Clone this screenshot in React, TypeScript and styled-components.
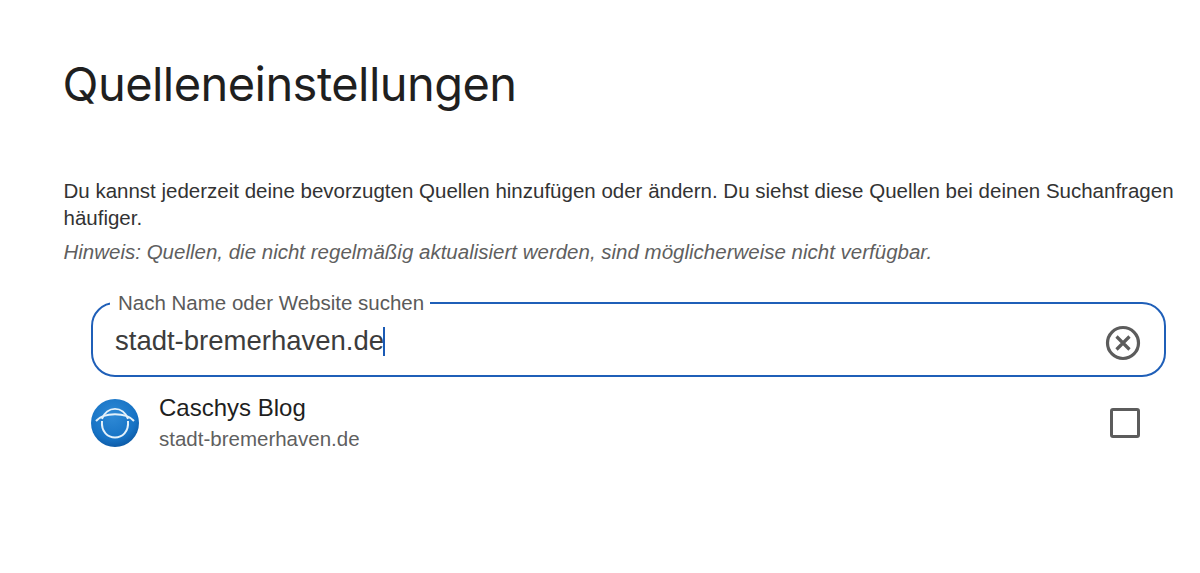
import React from 'react';
import styled, { createGlobalStyle } from 'styled-components';

const GlobalStyle = createGlobalStyle`
  html, body {
    margin: 0;
    padding: 0;
    background: #fff;
    overflow: hidden;
  }
`;

const Page = styled.main`
  box-sizing: border-box;
  width: 1200px;
  height: 573px;
  padding: 54px 24px 0 63.5px;
  font-family: 'Liberation Sans', Arial, sans-serif;
  color: #1f1f1f;
`;

const Title = styled.h1`
  margin: 0 0 0 -1px;
  font-family: Inter, 'Open Sans', sans-serif;
  font-size: 47px;
  line-height: 60px;
  font-weight: 400;
  letter-spacing: -0.55px;
  color: #1f1f1f;
`;

const Intro = styled.p`
  margin: 63px 0 0;
  font-size: 20.5px;
  line-height: 27px;
  color: #333;
`;

const Hint = styled.p`
  margin: 7px 0 0;
  font-size: 20.5px;
  line-height: 27px;
  font-style: italic;
  color: #5f5f5f;
`;

const SearchField = styled.fieldset`
  box-sizing: border-box;
  display: flex;
  align-items: center;
  justify-content: space-between;
  width: 1075px;
  height: 84px;
  margin: 28px 0 0 27.5px;
  padding: 0 23px 6px 22px;
  border: 2px solid #1f5fb8;
  border-radius: 24px;
`;

const SearchLabel = styled.legend`
  margin-left: -5px;
  padding: 0 6px 0 8px;
  font-size: 20.5px;
  line-height: 20px;
  color: #5a5a5a;
`;

const SearchValue = styled.div`
  display: flex;
  align-items: center;
  font-size: 27.5px;
  line-height: 32px;
  color: #3c3c3c;
`;

const Caret = styled.span`
  display: inline-block;
  width: 1.5px;
  height: 29px;
  margin-left: -1px;
  background: #1a5ab5;
`;

const IconButton = styled.button`
  display: flex;
  margin-top: 3px;
  padding: 0;
  border: 0;
  background: none;
`;

const ResultRow = styled.div`
  display: flex;
  align-items: center;
  margin: 15px 0 0 27.5px;
  width: 1049px;
`;

const Favicon = styled.svg`
  flex: none;
  width: 48px;
  height: 48px;
`;

const ResultText = styled.div`
  flex: 1;
  margin-left: 20px;
`;

const ResultName = styled.div`
  font-size: 24px;
  line-height: 32px;
  color: #1f1f1f;
`;

const ResultHost = styled.div`
  font-size: 20.5px;
  line-height: 30px;
  color: #5f5f5f;
`;

const Checkbox = styled.span`
  box-sizing: border-box;
  width: 30px;
  height: 30px;
  border: 3.5px solid #5c5c5c;
  border-radius: 3px;
`;

export default function App() {
  return (
    <Page>
      <GlobalStyle />
      <Title>Quelleneinstellungen</Title>
      <Intro>
        Du kannst jederzeit deine bevorzugten Quellen hinzufügen oder ändern. Du siehst diese Quellen bei deinen
        Suchanfragen häufiger.
      </Intro>
      <Hint>Hinweis: Quellen, die nicht regelmäßig aktualisiert werden, sind möglicherweise nicht verfügbar.</Hint>
      <SearchField>
        <SearchLabel>Nach Name oder Website suchen</SearchLabel>
        <SearchValue>
          stadt-bremerhaven.de
          <Caret />
        </SearchValue>
        <IconButton aria-label="Löschen">
          <svg width="36" height="36" viewBox="0 0 36 36" fill="none" stroke="#5c5c5c">
            <circle cx="18" cy="18" r="15.5" strokeWidth="3.2" />
            <path d="M11.5 11.5 24.5 24.5M24.5 11.5 11.5 24.5" strokeWidth="3.2" />
          </svg>
        </IconButton>
      </SearchField>
      <ResultRow>
        <Favicon viewBox="0 0 48 48">
          <defs>
            <radialGradient id="globe" cx="0.45" cy="0.35" r="0.7">
              <stop offset="0" stopColor="#2f8ad6" />
              <stop offset="0.7" stopColor="#1672c4" />
              <stop offset="1" stopColor="#0b55a0" />
            </radialGradient>
          </defs>
          <circle cx="24" cy="24" r="24" fill="url(#globe)" />
          <g fill="none" stroke="#e4f1fa">
            <path d="M11 20C15 6.5 33 6.5 37 20" strokeWidth="1.8" />
            <path d="M5 22C13 13 35 13 43 22" strokeWidth="2" />
            <path d="M11 22C9 44 39 44 37 22" strokeWidth="2" />
          </g>
        </Favicon>
        <ResultText>
          <ResultName>Caschys Blog</ResultName>
          <ResultHost>stadt-bremerhaven.de</ResultHost>
        </ResultText>
        <Checkbox />
      </ResultRow>
    </Page>
  );
}
